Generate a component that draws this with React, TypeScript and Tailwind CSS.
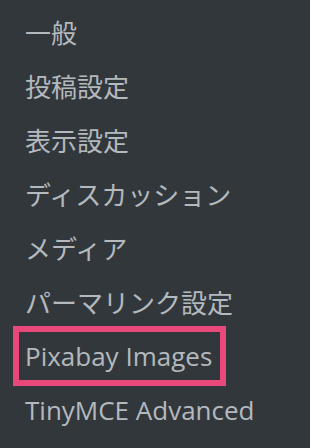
import React from "react";

const items = [
  { t: "一般", jp: true },
  { t: "投稿設定", jp: true },
  { t: "表示設定", jp: true },
  { t: "ディスカッション", jp: true },
  { t: "メディア", jp: true },
  { t: "パーマリンク設定", jp: true },
  { t: "Pixabay Images", jp: false },
  { t: "TinyMCE Advanced", jp: false },
];

export default function App() {
  return (
    <div className="w-[310px] h-[448px] bg-[#32373c] overflow-hidden pt-[5px]">
      {items.map(({ t, jp }) => (
        <div
          key={t}
          className="relative h-[54px] flex items-center pl-[25px] text-[26px] text-[#b4b9be] leading-none whitespace-nowrap"
          style={{
            fontFamily: jp
              ? '"Noto Sans CJK JP", sans-serif'
              : '"Open Sans", "Noto Sans CJK JP", sans-serif',
          }}
        >
          {t === "Pixabay Images" && (
            <div className="absolute left-[13px] top-[-3px] w-[213px] h-[60px] border-[6px] border-[#e9487a]" />
          )}
          <span>{t}</span>
        </div>
      ))}
    </div>
  );
}
